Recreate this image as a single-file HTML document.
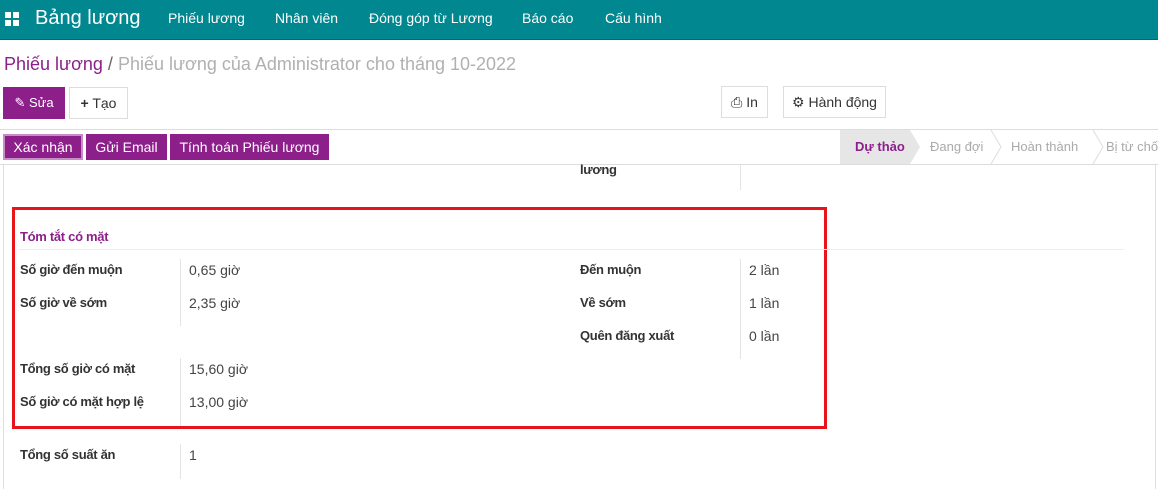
<!DOCTYPE html><html><head><meta charset="utf-8"><style>
*{box-sizing:border-box;margin:0;padding:0}
body{width:1158px;height:489px;overflow:hidden;background:#fff;font-family:"Liberation Sans",sans-serif;font-size:14px;color:#4c4c4c;position:relative}
.a{position:absolute;white-space:nowrap}
.nav{left:0;top:0;width:1158px;height:40px;background:#01878f;border-bottom:1px solid #016a70}
.nav .a{color:#fff;font-size:14px;top:10px}
.btn{position:absolute;height:32px;border:1px solid #ddd;background:#fff;color:#333;font-size:14px;line-height:30px;text-align:center}
.pb{position:absolute;height:26px;top:134px;background:#8c1f8a;color:#fff;font-size:14px;line-height:26px;text-align:center;white-space:nowrap}
.lbl{font-weight:bold;color:#333;font-size:13px;letter-spacing:-0.3px;line-height:16px}
.val{color:#444;line-height:16px}
.vl{position:absolute;width:1px;background:#e4e4e4}
.st{position:absolute;top:130px;height:34px;line-height:34px;font-size:13px;color:#aaa;white-space:nowrap}
</style></head><body>
<div class="a nav">
<svg class="a" style="left:5px;top:12px" width="14" height="14"><rect x="0" y="0" width="6" height="6" fill="#fff"/><rect x="8" y="0" width="6" height="6" fill="#fff"/><rect x="0" y="8" width="6" height="6" fill="#fff"/><rect x="8" y="8" width="6" height="6" fill="#fff"/></svg>
<span class="a" style="left:35px;top:7px;font-size:20px">Bảng lương</span>
<span class="a" style="left:168px">Phiếu lương</span>
<span class="a" style="left:275px">Nhân viên</span>
<span class="a" style="left:369px">Đóng góp từ Lương</span>
<span class="a" style="left:522px">Báo cáo</span>
<span class="a" style="left:605px">Cấu hình</span>
</div>
<div class="a" style="left:4px;top:54px;font-size:18px;color:#8c1f8a">Phiếu lương <span style="color:#666">/</span> <span style="color:#b0b0b0">Phiếu lương của Administrator cho tháng 10-2022</span></div>
<div class="btn" style="left:3px;top:87px;width:62px;background:#8c1f8a;border-color:#8c1f8a;color:#fff;font-size:13px">✎ Sửa</div>
<div class="btn" style="left:69px;top:87px;width:59px"><b>+</b> Tạo</div>
<div class="btn" style="left:721px;top:86px;width:47px">⎙ In</div>
<div class="btn" style="left:783px;top:86px;width:103px">⚙ Hành động</div>
<div class="a" style="left:0;top:129px;width:1158px;height:1px;background:#ddd"></div>
<div class="a" style="left:0;top:164px;width:1158px;height:1px;background:#ddd"></div>
<div class="pb" style="left:3px;width:80px;border:2px solid #c48dc3;line-height:22px">Xác nhận</div>
<div class="pb" style="left:86px;width:81px">Gửi Email</div>
<div class="pb" style="left:170px;width:159px">Tính toán Phiếu lương</div>
<svg class="a" style="left:840px;top:130px" width="318" height="34">
<polygon points="0,0 70,0 80,17 70,34 0,34" fill="#e6e6e6"/>
<polyline points="151,0 161,17 151,34" fill="none" stroke="#ddd"/>
<polyline points="253,0 263,17 253,34" fill="none" stroke="#ddd"/>
</svg>
<span class="st" style="left:855px;color:#8c1f8a;font-weight:bold">Dự thảo</span>
<span class="st" style="left:930px">Đang đợi</span>
<span class="st" style="left:1011px">Hoàn thành</span>
<span class="st" style="left:1106px">Bị từ chối</span>
<div class="a" style="left:3px;top:165px;width:1px;height:324px;background:#ddd"></div>
<div class="a" style="left:1155px;top:165px;width:1px;height:324px;background:#ddd"></div>
<span class="a lbl" style="left:580px;top:162px">lương</span>
<div class="vl" style="left:740px;top:165px;height:25px"></div>
<div class="a" style="left:12px;top:207px;width:815px;height:222px;border:3px solid #e8141c"></div>
<span class="a" style="left:20px;top:229px;color:#8c1f8a;font-weight:bold;font-size:13px;letter-spacing:-0.3px">Tóm tắt có mặt</span>
<div class="a" style="left:18px;top:249px;width:1106px;height:1px;background:#eee"></div>
<span class="a lbl" style="left:20px;top:262px">Số giờ đến muộn</span><span class="a val" style="left:189px;top:262px">0,65 giờ</span>
<span class="a lbl" style="left:20px;top:295px">Số giờ về sớm</span><span class="a val" style="left:189px;top:295px">2,35 giờ</span>
<div class="vl" style="left:180px;top:259px;height:67px"></div>
<span class="a lbl" style="left:580px;top:262px">Đến muộn</span><span class="a val" style="left:749px;top:262px">2 lần</span>
<span class="a lbl" style="left:580px;top:295px">Về sớm</span><span class="a val" style="left:749px;top:295px">1 lần</span>
<span class="a lbl" style="left:580px;top:328px">Quên đăng xuất</span><span class="a val" style="left:749px;top:328px">0 lần</span>
<div class="vl" style="left:740px;top:259px;height:100px"></div>
<span class="a lbl" style="left:20px;top:361px">Tổng số giờ có mặt</span><span class="a val" style="left:189px;top:361px">15,60 giờ</span>
<span class="a lbl" style="left:20px;top:394px">Số giờ có mặt hợp lệ</span><span class="a val" style="left:189px;top:394px">13,00 giờ</span>
<div class="vl" style="left:180px;top:358px;height:68px"></div>
<span class="a lbl" style="left:20px;top:447px">Tổng số suất ăn</span><span class="a val" style="left:189px;top:447px">1</span>
<div class="vl" style="left:180px;top:444px;height:35px"></div>
</body></html>
